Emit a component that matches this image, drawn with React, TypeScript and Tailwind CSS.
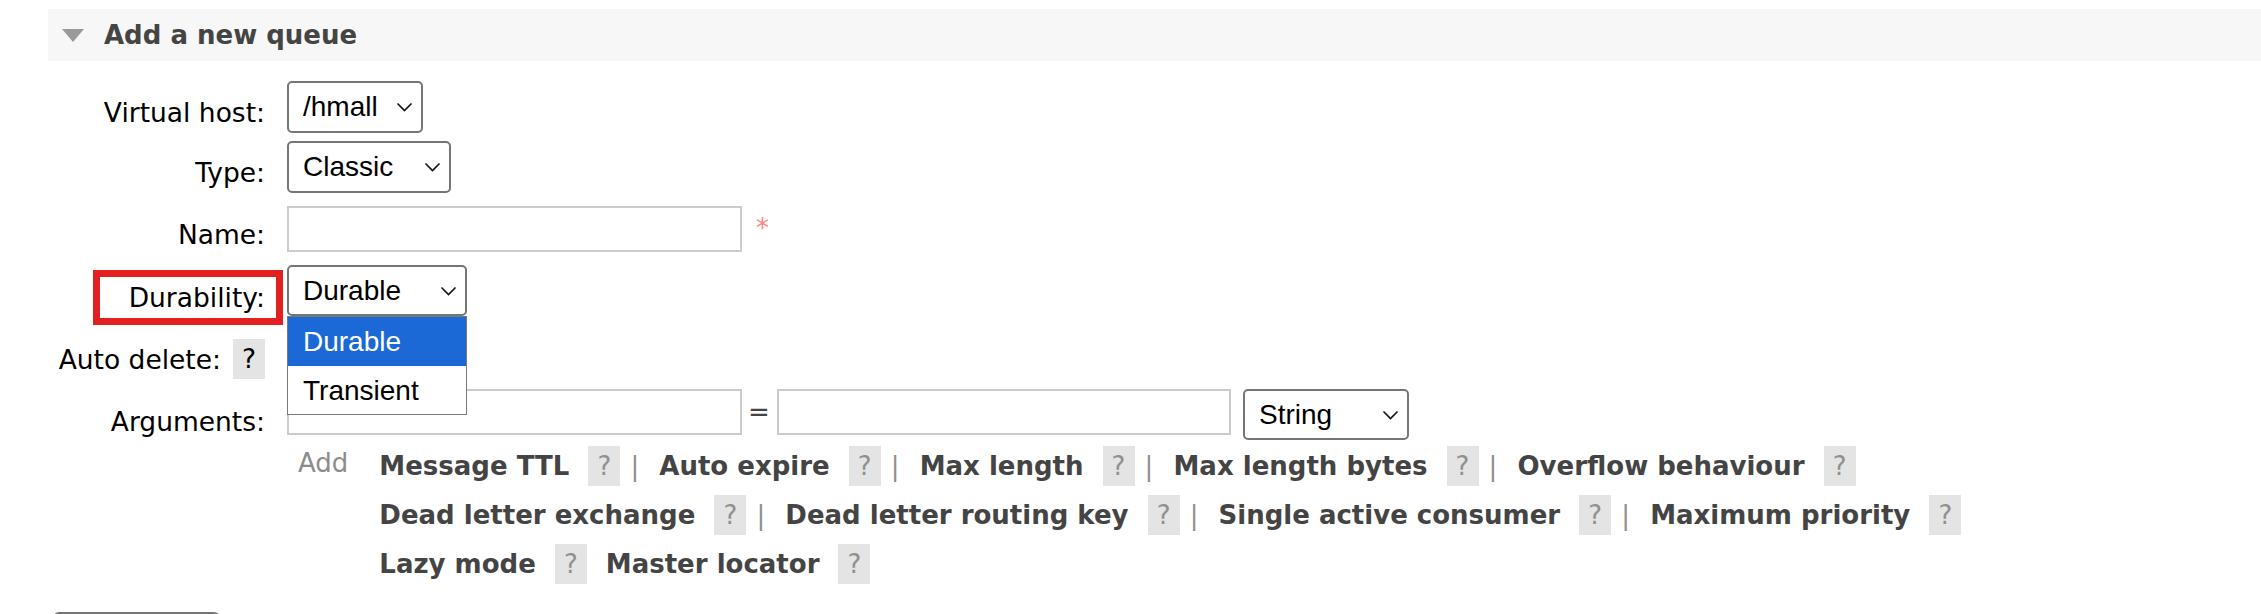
import React from 'react';

const labelCls = 'w-[265px] shrink-0 text-right text-[26.5px] leading-[30px] text-black';
const selectCls =
  'appearance-none h-full w-full rounded-[5px] border-2 border-[#767676] bg-white pl-[14px] text-[28px] text-black outline-none';

function Chevron() {
  return (
    <svg
      className="pointer-events-none absolute right-[10px] top-1/2 -translate-y-1/2"
      width="17"
      height="10"
      viewBox="0 0 17 10"
      fill="none"
    >
      <polyline points="1.5,1.5 8.5,8.5 15.5,1.5" stroke="#111" strokeWidth="1.6" />
    </svg>
  );
}

function Select({ value, options, width }: { value: string; options: string[]; width: string }) {
  return (
    <div className={`relative h-full ${width}`}>
      <select
        className={selectCls}
        style={{ fontFamily: '"Liberation Sans", Arial, sans-serif' }}
        defaultValue={value}
      >
        {options.map((o) => (
          <option key={o}>{o}</option>
        ))}
      </select>
      <Chevron />
    </div>
  );
}

function Help() {
  return (
    <span className="ml-[19px] inline-flex h-[40px] w-[32px] shrink-0 items-center justify-center bg-[#e4e4e4] font-normal text-[#909090]">
      ?
    </span>
  );
}

function Pipe() {
  return <span className="ml-[10px] w-[9px] shrink-0 text-center font-normal text-[#909090]">|</span>;
}

type Arg = { label: string; pipe: boolean };

const lines: Arg[][] = [
  [
    { label: 'Message TTL', pipe: true },
    { label: 'Auto expire', pipe: true },
    { label: 'Max length', pipe: true },
    { label: 'Max length bytes', pipe: true },
    { label: 'Overflow behaviour', pipe: false },
  ],
  [
    { label: 'Dead letter exchange', pipe: true },
    { label: 'Dead letter routing key', pipe: true },
    { label: 'Single active consumer', pipe: true },
    { label: 'Maximum priority', pipe: false },
  ],
  [
    { label: 'Lazy mode', pipe: false },
    { label: 'Master locator', pipe: false },
  ],
];

export default function App() {
  return (
    <div
      className="min-h-screen bg-white text-[26px]"
      style={{ fontFamily: '"DejaVu Sans", Verdana, sans-serif' }}
    >
      {/* section header */}
      <div className="ml-[48px] mt-[9px] flex h-[52px] items-center bg-[#f7f7f7]">
        <svg className="ml-[14px]" width="22" height="13" viewBox="0 0 22 13">
          <polygon points="0,0 22,0 11,13" fill="#9a9a9a" />
        </svg>
        <h2 className="ml-[20px] font-bold leading-[30px] text-[#444]">Add a new queue</h2>
      </div>

      {/* Virtual host */}
      <div className="mt-[20px] flex h-[52px]">
        <div className={`${labelCls} pt-[17px]`}>Virtual host:</div>
        <div className="ml-[22px] h-full">
          <Select value="/hmall" options={['/', '/hmall']} width="w-[136px]" />
        </div>
      </div>

      {/* Type */}
      <div className="mt-[8px] flex h-[52px]">
        <div className={`${labelCls} pt-[17px]`}>Type:</div>
        <div className="ml-[22px] h-full">
          <Select value="Classic" options={['Classic', 'Quorum', 'Stream']} width="w-[164px]" />
        </div>
      </div>

      {/* Name */}
      <div className="mt-[13px] flex h-[46px]">
        <div className={`${labelCls} pt-[14px]`}>Name:</div>
        <input className="ml-[22px] h-full w-[455px] border-2 border-[#cccccc] outline-none" type="text" />
        <span className="ml-[14px] mt-[7px] leading-[30px] text-[#ff8484]">*</span>
      </div>

      {/* Durability */}
      <div className="mt-[13px] flex h-[51px]">
        <div className={`relative ${labelCls} pt-[18px]`}>
          Durability:
          <span className="absolute left-[93px] top-[5px] h-[55px] w-[190px] border-[7px] border-[#e32020]" />
        </div>
        <div className="relative ml-[22px] h-full">
          <Select value="Durable" options={['Durable', 'Transient']} width="w-[180px]" />
          <ul
            className="absolute left-0 top-full z-10 w-[180px] border border-[#7a7a7a] bg-white text-[28px] leading-[49px] text-black"
            style={{ fontFamily: '"Liberation Sans", Arial, sans-serif' }}
          >
            <li className="h-[49px] bg-[#1b69d6] pl-[15px] text-white">Durable</li>
            <li className="h-[48px] pl-[15px]">Transient</li>
          </ul>
        </div>
      </div>

      {/* Auto delete */}
      <div className="mt-[12px] flex h-[52px]">
        <div className={`${labelCls} flex items-start justify-end`}>
          <span className="pt-[17px]">Auto delete:</span>
          <span className="ml-[12px] mt-[11px] inline-flex h-[40px] w-[32px] items-center justify-center bg-[#e4e4e4] text-black">
            ?
          </span>
        </div>
        <div className="ml-[22px] h-full">
          <Select value="No" options={['No', 'Yes']} width="w-[100px]" />
        </div>
      </div>

      {/* Arguments */}
      <div className="mt-[9px] flex h-[51px]">
        <div className={`${labelCls} pt-[18px]`}>Arguments:</div>
        <div className="ml-[22px] flex h-full items-start">
          <input className="h-[46px] w-[455px] border-2 border-[#cccccc] outline-none" type="text" />
          <span className="ml-[6px] w-[22px] pt-[8px] text-center leading-[30px] text-[#444]">=</span>
          <input className="ml-[7px] h-[46px] w-[454px] border-2 border-[#cccccc] outline-none" type="text" />
          <div className="ml-[12px] h-full">
            <Select value="String" options={['String', 'Number', 'Boolean', 'List']} width="w-[166px]" />
          </div>
        </div>
      </div>

      {/* argument shortcuts */}
      <div className="mt-[6px] flex">
        <div className="w-[265px] shrink-0" />
        <div className="ml-[22px] flex">
          <span className="pl-[11px] pt-[2px] leading-[30px] text-[#8c8c8c]">Add</span>
          <div className="ml-[31px] flex flex-col gap-[9px]">
            {lines.map((line, i) => (
              <div key={i} className="flex h-[40px] items-center font-bold text-[#444]">
                {line.map((a, j) => (
                  <React.Fragment key={a.label}>
                    <span className={`whitespace-nowrap ${j > 0 ? (line[j - 1].pipe ? 'ml-[20px]' : 'ml-[19px]') : ''}`}>
                      {a.label}
                    </span>
                    <Help />
                    {a.pipe && <Pipe />}
                  </React.Fragment>
                ))}
              </div>
            ))}
          </div>
        </div>
      </div>

      {/* submit button, only its top edge is in view */}
      <button
        aria-label="Add queue"
        className="ml-[53px] mt-[28px] block h-[50px] w-[167px] rounded-[6px] border-2 border-[#767676] bg-[#efefef]"
      />
    </div>
  );
}
